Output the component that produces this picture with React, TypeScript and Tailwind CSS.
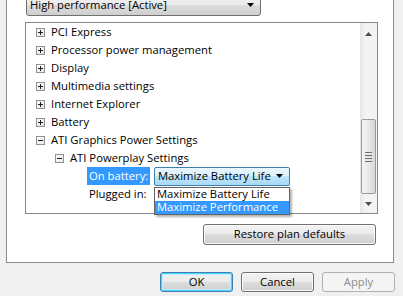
import React from 'react';

const FONT = { fontFamily: '"Open Sans", "Noto Sans", sans-serif' };

function Box({ open }: { open?: boolean }) {
  return (
    <span className="relative flex h-[9px] w-[9px] shrink-0 items-center justify-center border border-[#919191] bg-gradient-to-br from-white to-[#e6e6e6]">
      <span className="absolute h-px w-[5px] bg-[#1e1e1e]" />
      {!open && <span className="absolute h-[5px] w-px bg-[#1e1e1e]" />}
    </span>
  );
}

function Node({ label, indent = 0, open }: { label: string; indent?: number; open?: boolean }) {
  return (
    <div className="flex h-[18px] items-center" style={{ paddingLeft: 10 + indent * 19 }}>
      <Box open={open} />
      <span className="ml-[6px] whitespace-nowrap text-[11.25px] leading-none text-black">{label}</span>
    </div>
  );
}

function Button({ children, kind, className = '' }: { children: React.ReactNode; kind?: 'default' | 'disabled'; className?: string }) {
  const border =
    kind === 'default' ? 'border-[#3c7fb1]' : kind === 'disabled' ? 'border-[#adb2b5]' : 'border-[#707070]';
  const bg =
    kind === 'disabled'
      ? 'bg-[#f4f4f4]'
      : kind === 'default'
        ? 'bg-[linear-gradient(#f2f2f2_0%,#ebebeb_50%,#dddddd_50%,#cfcfcf_100%)] shadow-[inset_0_0_0_1px_#48d4fa,inset_0_0_0_2px_#c6ecfb]'
        : 'bg-[linear-gradient(#f2f2f2_0%,#ebebeb_50%,#dddddd_50%,#cfcfcf_100%)] shadow-[inset_0_0_0_1px_#ffffffcc]';
  return (
    <div
      className={`flex items-center justify-center whitespace-nowrap rounded-[3px] border text-[11.25px] ${border} ${bg} ${
        kind === 'disabled' ? 'text-[#8d8d8d]' : 'text-black'
      } ${className}`}
    >
      {children}
    </div>
  );
}

export default function App() {
  return (
    <div className="h-[296px] w-[403px] overflow-hidden bg-[#f0f0f0]" style={FONT}>
      {/* white tab page */}
      <div className="-mt-[7px] ml-[6px] flex h-[270px] w-[388px] flex-col border border-[#898c95] bg-white pl-[18px] pr-[17px]">
        {/* plan selector */}
        <div className="ml-px flex h-[22px] w-[235px] items-center justify-between rounded-[3px] border border-[#707070] bg-[linear-gradient(#f2f2f2_0%,#ebebeb_50%,#dddddd_50%,#cfcfcf_100%)] pl-[3px] pr-[5px] text-[11.25px]">
          <span className="whitespace-nowrap text-black">High performance [Active]</span>
          <svg width="8" height="5" viewBox="0 0 8 5">
            <path d="M0 0h7L3.5 4z" fill="#000" />
          </svg>
        </div>

        {/* settings tree */}
        <div className="mt-[6px] flex h-[192px] w-[353px] border border-[#828790] bg-white">
          <div className="relative flex-1">
            <Node label="PCI Express" />
            <Node label="Processor power management" />
            <Node label="Display" />
            <Node label="Multimedia settings" />
            <Node label="Internet Explorer" />
            <Node label="Battery" />
            <Node label="ATI Graphics Power Settings" open />
            <Node label="ATI Powerplay Settings" indent={1} open />
            <div className="flex h-[18px] items-center pl-[61px]">
              <span className="flex h-[18px] w-[63px] items-center whitespace-nowrap bg-[#3399ff] pl-[2px] text-[11.25px] text-white">
                On battery:
              </span>
              <div className="relative ml-[4px]">
                <div className="flex h-[19px] w-[136px] items-center justify-between rounded-[2px] border border-[#3c7fb1] bg-[linear-gradient(#eaf6fd_0%,#d9f0fc_50%,#bee6fd_50%,#a7d9f5_100%)] pl-[3px] pr-[5px] text-[11.25px] text-black">
                  <span className="whitespace-nowrap">Maximize Battery Life</span>
                  <svg width="8" height="5" viewBox="0 0 8 5">
                    <path d="M0 0h7L3.5 4z" fill="#000" />
                  </svg>
                </div>
                <div className="absolute left-0 top-[20px] z-10 w-[136px] border border-[#646464] bg-white text-[11.25px] shadow-[2px_2px_2px_rgba(0,0,0,0.3)]">
                  <div className="flex h-[13px] items-center whitespace-nowrap pl-[2px] text-black">Maximize Battery Life</div>
                  <div className="flex h-[13px] items-center whitespace-nowrap bg-[#3399ff] pl-[2px] text-white">Maximize Performance</div>
                </div>
              </div>
            </div>
            <div className="flex h-[18px] items-center whitespace-nowrap pl-[63px] text-[11.25px] text-black">Plugged in:</div>
          </div>

          {/* scrollbar */}
          <div className="flex w-[17px] flex-col items-center bg-[linear-gradient(90deg,#e5e5e5,#f3f3f3_30%,#f3f3f3)]">
            <div className="flex h-[19px] w-full items-center justify-center pt-[2px]">
              <svg width="7" height="4" viewBox="0 0 7 4">
                <path d="M0 4h7L3.5 0z" fill="#4d4d4d" />
              </svg>
            </div>
            <div className="flex-1" />
            <div className="flex h-[75px] w-[15px] items-center justify-center rounded-[2px] border border-[#9b9b9b] bg-[linear-gradient(90deg,#f4f4f4,#e8e8e8_50%,#d6d6d6)]">
              <div className="flex flex-col gap-[2px]">
                <span className="h-px w-[7px] bg-[#6d6d6d]" />
                <span className="h-px w-[7px] bg-[#6d6d6d]" />
                <span className="h-px w-[7px] bg-[#6d6d6d]" />
                <span className="h-px w-[7px] bg-[#6d6d6d]" />
              </div>
            </div>
            <div className="flex h-[19px] w-full items-center justify-center">
              <svg width="7" height="4" viewBox="0 0 7 4">
                <path d="M0 0h7L3.5 4z" fill="#4d4d4d" />
              </svg>
            </div>
          </div>
        </div>

        <div className="mt-[10px] flex justify-end">
          <Button className="h-[21px] w-[173px]">Restore plan defaults</Button>
        </div>
      </div>

      {/* dialog buttons */}
      <div className="mt-[9px] flex justify-end gap-[8px] pr-[8px]">
        <Button kind="default" className="h-[20px] w-[73px]">OK</Button>
        <Button className="h-[20px] w-[73px]">Cancel</Button>
        <Button kind="disabled" className="h-[20px] w-[73px]">Apply</Button>
      </div>
    </div>
  );
}
